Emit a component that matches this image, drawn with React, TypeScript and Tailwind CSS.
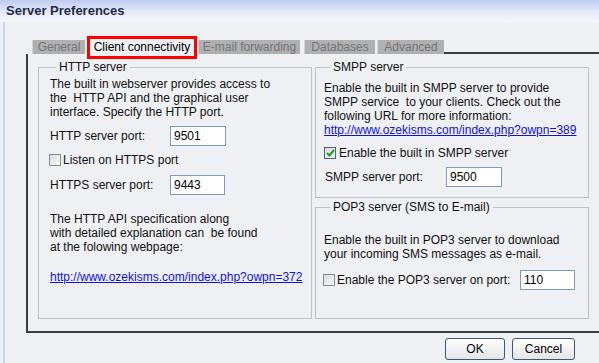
import React from "react";

function Checkbox({ checked }: { checked?: boolean }) {
  return (
    <span
      className={
        checked
          ? "w-[12px] h-[12px] shrink-0 border border-[#4f6386] bg-gradient-to-br from-[#d8d9dc] to-[#fbfbfb] flex items-center justify-center"
          : "w-[12px] h-[12px] shrink-0 border border-[#8a8b8e] bg-gradient-to-br from-[#d8d9dc] to-[#fbfbfb] flex items-center justify-center"
      }
    >
      {checked && (
        <svg width="9" height="8" viewBox="0 0 9 8">
          <path d="M1 4 L3.5 6.5 L8 1" stroke="#1f9a22" strokeWidth="2" fill="none" />
        </svg>
      )}
    </span>
  );
}

function Field({ value, w }: { value: string; w: string }) {
  return (
    <div className={`${w} h-[20px] shrink-0 bg-white border border-[#7f9db9] pl-[3px] leading-[18px] text-black`}>
      {value}
    </div>
  );
}

function Tab({ label, w }: { label: string; w: string }) {
  return (
    <div className={`${w} h-[14px] leading-[14px] shrink-0 bg-[#b0b0b2] text-[#747476] text-center border-l border-[#d4d4d6] whitespace-nowrap`}>
      {label}
    </div>
  );
}

export default function App() {
  return (
    <div className="w-[599px] h-[363px] overflow-hidden bg-[#eff0f4] flex flex-col font-['Liberation_Sans',Arial,sans-serif] text-[12px] text-[#111]">
      <div className="h-[22px] shrink-0 bg-gradient-to-b from-[#bfcbef] via-[#e3e8f6] to-[#f6f7fb] pl-[6px] pt-[2px]">
        <span className="text-[13px] font-bold leading-[16px] text-[#1f2c4d]">Server Preferences</span>
      </div>
      <div className="flex-1 ml-[3px] border-l-2 border-[#ccd5ee] pl-[21px] flex flex-col">
        {/* tab row */}
        <div className="mt-[13px] h-[19px] flex items-end">
          <div className="w-[6px] shrink-0" />
          <Tab label="General" w="w-[53px]" />
          <div className="w-[2px] shrink-0" />
          <div className="relative z-10 w-[110px] h-[23px] mb-[-5px] shrink-0 border-[3px] border-[#ff0000] bg-[#eff0f4] text-black text-center leading-[17px] whitespace-nowrap">
            Client connectivity
          </div>
          <div className="w-[1px] shrink-0" />
          <Tab label="E-mail forwarding" w="w-[102px]" />
          <div className="w-[4px] shrink-0" />
          <Tab label="Databases" w="w-[71px]" />
          <div className="w-[2px] shrink-0" />
          <Tab label="Advanced" w="w-[67px]" />
          <div className="flex-1 border-b-2 border-[#3c3c3e]" />
        </div>
        {/* panel */}
        <div className="h-[279px] shrink-0 border-l-2 border-b-2 border-[#3c3c3e] pl-[10px] pt-[6px] flex gap-[3px]">
          <fieldset className="w-[274px] h-[259px] shrink-0 border border-[#c2c3c6] pl-[11px] pt-[3px] flex flex-col">
            <legend className="ml-[6px] px-[3px] leading-[14px]">HTTP server</legend>
            <div className="leading-[14px]">
              The built in webserver provides access to
              <br />
              the&nbsp; HTTP API and the graphical user
              <br />
              interface. Specify the HTTP port.
            </div>
            <div className="mt-[7px] h-[20px] flex items-center">
              <span className="w-[120px] shrink-0">HTTP server port:</span>
              <Field value="9501" w="w-[56px]" />
            </div>
            <div className="mt-[4px] h-[20px] flex items-center gap-[2px] ml-[-1px]">
              <Checkbox />
              <span>Listen on HTTPS port</span>
            </div>
            <div className="mt-[5px] h-[20px] flex items-center">
              <span className="w-[120px] shrink-0">HTTPS server port:</span>
              <Field value="9443" w="w-[55px]" />
            </div>
            <div className="mt-[17px] leading-[14px]">
              The HTTP API specification along
              <br />
              with detailed explanation can&nbsp; be found
              <br />
              at the folowing webpage:
            </div>
            <div className="mt-[16px] leading-[14px] text-[#1010d8] underline">
              http://www.ozekisms.com/index.php?owpn=372
            </div>
          </fieldset>
          <div className="w-[274px] shrink-0 flex flex-col gap-[2px]">
            <fieldset className="h-[138px] shrink-0 border border-[#c2c3c6] pl-[8px] pt-[7px] flex flex-col">
              <legend className="ml-[6px] px-[3px] leading-[14px]">SMPP server</legend>
              <div className="leading-[14px]">
                Enable the built in SMPP server to provide
                <br />
                SMPP service&nbsp; to your clients. Check out the
                <br />
                following URL for more information:
              </div>
              <div className="leading-[14px] text-[#1010d8] underline">
                http://www.ozekisms.com/index.php?owpn=389
              </div>
              <div className="mt-[6px] h-[20px] flex items-center gap-[3px]">
                <Checkbox checked />
                <span>Enable the built in SMPP server</span>
              </div>
              <div className="mt-[4px] h-[20px] flex items-center">
                <span className="w-[122px] shrink-0 pl-[1px]">SMPP server port:</span>
                <Field value="9500" w="w-[56px]" />
              </div>
            </fieldset>
            <fieldset className="h-[119px] shrink-0 border border-[#c2c3c6] pl-[8px] pt-[19px] flex flex-col">
              <legend className="ml-[6px] px-[3px] leading-[14px]">POP3 server (SMS to E-mail)</legend>
              <div className="leading-[14px]">
                Enable the built in POP3 server to download
                <br />
                your incoming SMS messages as e-mail.
              </div>
              <div className="mt-[9px] h-[20px] flex items-center gap-[2px] ml-[-1px]">
                <Checkbox />
                <span className="w-[181px] shrink-0">Enable the POP3 server on port:</span>
                <Field value="110" w="w-[55px]" />
              </div>
            </fieldset>
          </div>
        </div>
        {/* buttons */}
        <div className="mt-[5px] flex justify-end gap-[7px] pr-[24px]">
          <button className="w-[60px] h-[22px] rounded-[3px] border border-[#3d5679] bg-gradient-to-b from-[#ffffff] to-[#e4e5e8] text-black text-[12px] leading-[20px]">
            OK
          </button>
          <button className="w-[63px] h-[22px] rounded-[3px] border border-[#3d5679] bg-gradient-to-b from-[#ffffff] to-[#e4e5e8] text-black text-[12px] leading-[20px]">
            Cancel
          </button>
        </div>
      </div>
    </div>
  );
}
